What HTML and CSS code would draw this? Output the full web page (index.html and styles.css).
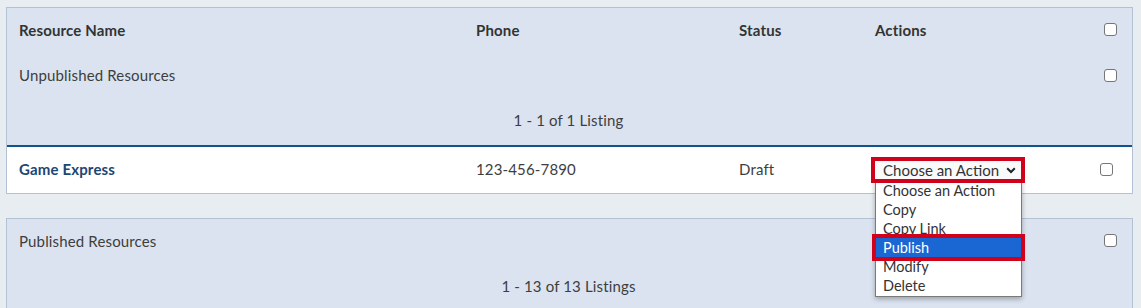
FILE: index.html
```html
<!DOCTYPE html>
<html>
<head>
<meta charset="utf-8">
<link rel="stylesheet" href="styles.css">
</head>
<body>
<div class="page">
  <section class="panel">
    <div class="row head">
      <div class="c-name">Resource Name</div>
      <div class="c-phone">Phone</div>
      <div class="c-status">Status</div>
      <div class="c-actions">Actions</div>
      <div class="c-check"><span class="cb"></span></div>
    </div>
    <div class="row group">
      <div class="c-name">Unpublished Resources</div>
      <div class="c-check"><span class="cb"></span></div>
    </div>
    <div class="row count">1 - 1 of 1 Listing</div>
    <div class="row item">
      <div class="c-name"><a class="res-link">Game Express</a></div>
      <div class="c-phone">123-456-7890</div>
      <div class="c-status">Draft</div>
      <div class="c-actions">
        <div class="select-wrap">
          <div class="select">
            <span>Choose an Action</span>
            <svg class="chev" width="10" height="7" viewBox="0 0 10 7"><path d="M1.2 1.3 L5 5 L8.8 1.3" fill="none" stroke="#222" stroke-width="2"/></svg>
          </div>
          <ul class="options">
            <li>Choose an Action</li>
            <li>Copy</li>
            <li>Copy Link</li>
            <li class="sel">Publish</li>
            <li>Modify</li>
            <li>Delete</li>
          </ul>
        </div>
      </div>
      <div class="c-check shift"><span class="cb"></span></div>
    </div>
  </section>

  <section class="panel second">
    <div class="row group">
      <div class="c-name">Published Resources</div>
      <div class="c-check"><span class="cb"></span></div>
    </div>
    <div class="row count">1 - 13 of 13 Listings</div>
  </section>
</div>
</body>
</html>
```

FILE: styles.css
```css
* { box-sizing: border-box; }
html, body { margin: 0; padding: 0; }
body {
  background: #e8edf2;
  font-family: Lato, "Open Sans", sans-serif;
  font-size: 15px;
  letter-spacing: 0.15px;
  color: #3e3e3e;
  overflow: hidden;
}
.page {
  padding: 7px 8px 0 6px;
}
.panel {
  background: #dae3ef;
  border: 1px solid #b3c1d4;
}
.panel.second {
  margin-top: 24px;
  border-bottom: none;
  height: 100px;
}
.row {
  display: grid;
  grid-template-columns: 457px 263px 136px 1fr 28px;
  align-items: center;
  padding-left: 12px;
  padding-bottom: 2px;
  height: 46px;
}
.head { font-weight: 700; color: #333; height: 45px; }
.group { height: 46px; }
.second .group { height: 45px; }
.group .c-name { grid-column: 1; }
.group .c-check { grid-column: 5; }
.count {
  display: flex;
  justify-content: center;
  padding-left: 0;
  padding-right: 2px;
  padding-bottom: 5px;
  height: 46px;
}
.second .count { height: 44px; padding-bottom: 0; }
.item {
  background: #fff;
  border-top: 2px solid #0f548c;
  height: 48px;
}
.res-link {
  color: #1c4673;
  font-weight: 700;
}
.c-check { display: flex; }
.c-check.shift { margin-left: -4px; }
.cb {
  display: inline-block;
  width: 13px;
  height: 13px;
  border: 1px solid #767676;
  border-radius: 3px;
  background: #fff;
}
.c-actions { position: relative; }
.select-wrap {
  position: relative;
  width: 154px;
  margin-left: -4px;
  margin-top: 2px;
}
.select {
  display: flex;
  align-items: center;
  justify-content: space-between;
  height: 26px;
  border: 4px solid #d0021b;
  background: #fafafa;
  padding: 0 5px 1px 8px;
  color: #333;
  font-size: 15px;
  letter-spacing: 0;
  position: relative;
  z-index: 3;
}
.chev { margin-top: 1px; }
.options {
  position: absolute;
  left: 4px;
  top: 23px;
  width: 147px;
  margin: 0;
  padding: 0 0 1px 0;
  list-style: none;
  background: #fff;
  border: 1px solid #7a7a7a;
  box-shadow: 0 2px 5px rgba(0,0,0,0.3);
  z-index: 2;
  font-size: 14.5px;
  letter-spacing: 0;
  color: #333;
}
.options li {
  height: 19px;
  line-height: 19px;
  padding-left: 7px;
}
.options li.sel {
  background: #1a66d3;
  color: #fff;
  outline: 4px solid #d0021b;
  position: relative;
  z-index: 1;
}
```
